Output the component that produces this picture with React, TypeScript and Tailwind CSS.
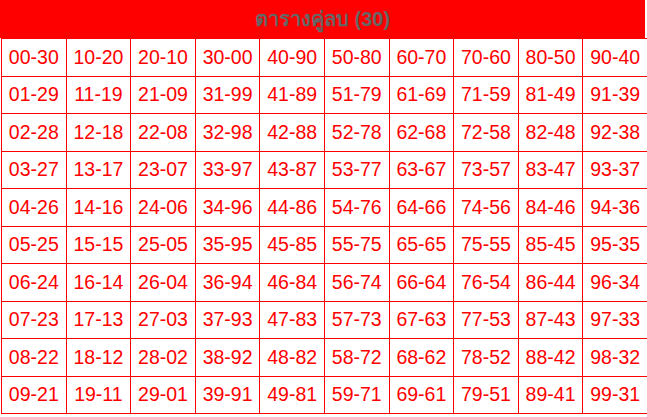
import React from 'react';

const pad = (n: number) => n.toString().padStart(2, '0');

const rows = Array.from({ length: 10 }, (_, r) =>
  Array.from({ length: 10 }, (_, c) => {
    const a = c * 10 + r;
    const b = (130 - a) % 100;
    return `${pad(a)}-${pad(b)}`;
  })
);

export default function App() {
  return (
    <div
      className="w-[647px] h-[417px] overflow-hidden bg-white"
      style={{ fontFamily: '"Liberation Sans", Arial, "Noto Sans", sans-serif' }}
    >
      {/* header */}
      <div className="w-[645px] h-[38px] bg-[#ff0000] flex items-center justify-center">
        <span className="text-[20px] font-bold text-[#666666] leading-none">ตารางคู่ลบ (30)</span>
      </div>

      <table className="ml-px w-[647px] table-fixed border-collapse">
        <tbody>
          {rows.map((row, i) => (
            <tr key={i} className="h-[37.5px]">
              {row.map((cell) => (
                <td
                  key={cell}
                  className="border border-[#ff0000] p-0 text-center align-middle text-[19.5px] leading-none text-[#ff0000]"
                >
                  {cell}
                </td>
              ))}
            </tr>
          ))}
        </tbody>
      </table>
    </div>
  );
}
